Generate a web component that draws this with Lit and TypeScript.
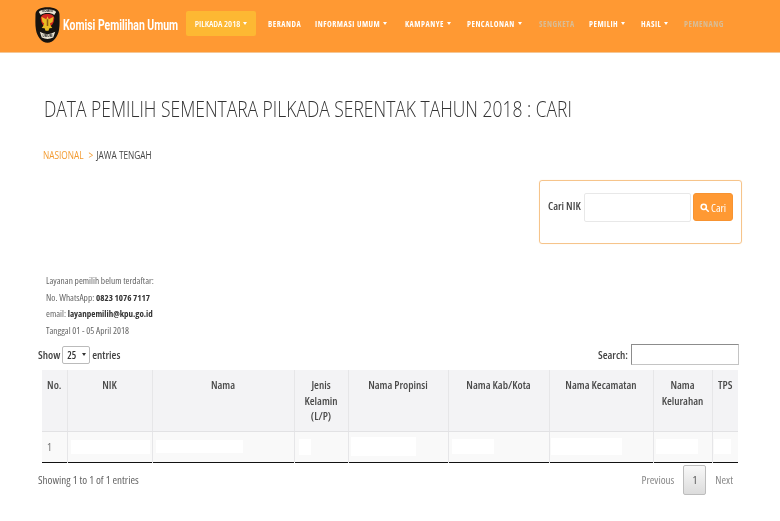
import { LitElement, html, css, svg } from "lit";
import { customElement } from "lit/decorators.js";

const caret = html`<span class="caret"></span>`;
const logo = svg`<svg class="logo" viewBox="0 0 26 38" width="25" height="38" aria-hidden="true">
  <path d="M13 .5C20 .5 25.5 3 25.5 8c0 5 .5 10-.5 16-1 7-6 13.500-12 13.500S2 31 1 24C0 18 .5 13 .5 8 .5 3 6 .5 13 .5Z" fill="#17130f"/>
  <path d="M13 2.500c4 0 8 1 9 3l-2 3c-2-1.500-4-2-7-2s-5 .5-7 2l-2-3c1-2 5-3 9-3Z" fill="#e9e2d2"/>
  <text x="13" y="6" text-anchor="middle" class="ltxt">KOMISI</text>
  <path d="M13 7.500c4 0 7 1.500 7 4.500 0 5-3 9-7 9s-7-4-7-9c0-3 3-4.500 7-4.500Z" fill="#d1261f"/>
  <path d="M13 10l1.300 3 5-2.500-1 5.500-2.800 1.500 1 2.500 1.500 2-3 .5-1 2.500h-3l-1-2.500-3-.5 1.500-2 1-2.500L7.700 16l-1-5.500 5 2.500Z" fill="#e9bb24"/>
  <path d="M12.200 13h1.600v7h-1.600Z" fill="#8a5a16"/>
  <path d="M5 26q8 5 16 0l-2 6q-6 3-12 0Z" fill="#e9e2d2"/>
  <text x="13" y="31" text-anchor="middle" class="ltxt">UMUM</text>
</svg>`;

@customElement("app-root")
export class AppRoot extends LitElement {
  static styles = css`
    :host { display: block; width: 780px; height: 521px; overflow: hidden; background: #fff; color: #333;
      font-family: "Open Sans", "Liberation Sans", sans-serif; font-stretch: 75%; }
    * { box-sizing: border-box; }

    header { height: 53px; background: #ff9933; border-bottom: 1px solid #f5c795; display: flex; align-items: flex-start; padding-left: 35px; will-change: transform; }
    .brand { display: flex; align-items: center; gap: 3px; height: 43px; margin-top: 3px; width: 142px; flex: none; }
    .logo { flex: none; }
    .ltxt { font: 700 3px "Open Sans", sans-serif; fill: #222; }
    .brand span { font: 700 14px "Roboto", sans-serif; color: #fff; white-space: nowrap; display: block; transform: scaleX(.745); transform-origin: left; }
    .pilkada { margin: 11px 0 0 9px; width: 70px; height: 25px; flex: none; background: #fdb833; border-radius: 2px; color: #fff; font-size: 9px; font-weight: 600;
      display: flex; align-items: center; justify-content: center; gap: 3px; white-space: nowrap; }
    nav { display: flex; margin: 11px 0 0 12px; height: 25px; align-items: center; font-size: 8px; font-weight: 700; color: #fff; letter-spacing: .52px; white-space: nowrap; }
    nav a { display: flex; align-items: center; gap: 3px; }
    nav a.off { color: #d9bd97; }
    .caret { display: inline-block; width: 0; height: 0; border: 2.500px solid transparent; border-top: 3px solid currentColor; border-bottom: 0; }
    .n1 { width: 47px; } .n2 { width: 90px; } .n3 { width: 62px; } .n4 { width: 72px; } .n5 { width: 50px; } .n6 { width: 52px; } .n7 { width: 43px; }

    main { padding: 0 41px 0 42px; will-change: transform; }
    h1 { margin: 42px 0 0 2px; font-size: 22.100px; line-height: 26px; font-weight: 300; font-stretch: 100%; color: #333; white-space: nowrap; transform: scaleX(.7915); transform-origin: left; }
    .crumb { margin: 27px 0 0 1px; font-size: 10.300px; font-stretch: 100%; line-height: 14px; display: flex; font-weight: 400; white-space: nowrap; transform: scaleX(.805); transform-origin: left; }
    .crumb .root { color: #f39a2e; }
    .crumb .sep { color: #f39a2e; margin: 0 4px 0 6px; }
    .crumb .cur { color: #444; }

    .searchwrap { display: flex; justify-content: flex-end; margin: 18px -3px 0 0; }
    .searchbox { width: 203px; height: 64px; border: 1px solid #f6c48b; border-radius: 3px; padding: 12px 8px 0 8px; display: flex; align-items: flex-start; box-shadow: 0 0 1px #fbdcb8; }
    .searchbox label { font-size: 11.100px; font-weight: 600; width: 36px; margin-top: 6px; line-height: 14px; color: #444; white-space: nowrap; }
    .searchbox .in { width: 108px; height: 29px; border: 1px solid #e8e8e8; border-radius: 2px; background: #fff; }
    .searchbox button { margin-left: 2px; width: 40px; height: 28px; background: #ff9933; color: #fff; border: 1px solid #f79331; border-radius: 3px; padding: 0; font: 400 11.100px "Open Sans", sans-serif; font-stretch: 75%; display: flex; align-items: center; justify-content: center; gap: 2px; }

    .info { margin: 29px 0 0 4px; font-size: 9.400px; line-height: 16.500px; color: #666; }
    .info b { color: #333; font-weight: 700; font-size: 9px; }

    .controls { display: flex; justify-content: space-between; align-items: center; margin: 5px 0 0 -4px; height: 21px; font-size: 11.100px; font-weight: 600; color: #444; }
    .show { display: flex; align-items: center; gap: 2px; }
    .sel { width: 28px; height: 18px; border: 1px solid #bbb; border-radius: 2px; background: #fff; display: flex; align-items: center; justify-content: space-between; padding: 0 3px 0 4px; font-size: 10px; color: #333; }
    .sel .caret { color: #333; }
    .srch { display: flex; align-items: center; gap: 3px; }
    .srch i { display: block; width: 108px; height: 21px; border: 1px solid #c4c4c4; border-top-color: #8c8c8c; border-left-color: #8c8c8c; background: #fff; }

    table { border-collapse: collapse; table-layout: fixed; width: 696px; margin-top: 5px; border-bottom: 1.500px solid #111; }
    th, td { border: 1px solid #e6e6e8; border-top: 0; border-bottom: 0; padding: 0; }
    th:first-child, td:first-child { border-left: 0; }
    th:last-child, td:last-child { border-right: 0; }
    th { height: 61px; background: #f3f3f5; font-size: 11.100px; line-height: 15.500px; font-weight: 600; color: #4a4a4a; vertical-align: top; padding: 7px 2px 0; border-bottom: 1px solid #e2e2e4; }
    td { height: 31px; background: #f9f9f9; font-size: 11.100px; color: #777; padding: 0 0 0 5px; }
    .w1 { width: 25px; } .w2 { width: 85px; } .w3 { width: 142px; } .w4 { width: 54px; } .w5 { width: 100px; } .w6 { width: 101px; } .w7 { width: 104px; } .w8 { width: 59px; } .w9 { width: 26px; }
    .red { display: block; background: #fff; margin-left: -2px; }
    .r2 { width: 79px; height: 14px; } .r3 { width: 87px; height: 13px; } .r4 { width: 12px; height: 16px; margin-left: -1px; } .r5 { width: 65px; height: 19px; margin-left: -3px; }
    .r6 { width: 42px; height: 15px; } .r7 { width: 71px; height: 17px; margin-left: -4px; } .r8 { width: 42px; height: 15px; margin-left: -3px; } .r9 { width: 17px; height: 15px; margin-left: -4px; }

    .foot { display: flex; justify-content: space-between; margin: 2px 6px 0 -4px; color: #666; font-size: 11.100px; line-height: 15px; }
    .foot .txt { margin-top: 7px; }
    .pager { display: flex; align-items: center; color: #888; gap: 9px; }
    .pager .cur { width: 23px; height: 30px; display: flex; align-items: center; justify-content: center; border: 1px solid #bdbdbd; border-radius: 2px; background: linear-gradient(#f8f8f8, #dcdcdc); color: #555; }
  `;

  render() {
    return html`
      <header>
        <div class="brand">${logo}<span>Komisi Pemilihan Umum</span></div>
        <div class="pilkada">PILKADA 2018 ${caret}</div>
        <nav>
          <a class="n1">BERANDA</a>
          <a class="n2">INFORMASI UMUM ${caret}</a>
          <a class="n3">KAMPANYE ${caret}</a>
          <a class="n4">PENCALONAN ${caret}</a>
          <a class="n5 off">SENGKETA</a>
          <a class="n6">PEMILIH ${caret}</a>
          <a class="n7">HASIL ${caret}</a>
          <a class="off">PEMENANG</a>
        </nav>
      </header>
      <main>
        <h1>DATA PEMILIH SEMENTARA PILKADA SERENTAK TAHUN 2018 : CARI</h1>
        <div class="crumb"><span class="root">NASIONAL</span><span class="sep">&gt;</span><span class="cur">JAWA TENGAH</span></div>
        <div class="searchwrap">
          <div class="searchbox">
            <label>Cari NIK</label>
            <div class="in"></div>
            <button>
              <svg viewBox="0 0 12 12" width="9" height="9" fill="none" stroke="#fff" stroke-width="2"><circle cx="5" cy="5" r="3.500"/><path d="M7.600 7.600 11 11" stroke-linecap="round"/></svg>
              Cari
            </button>
          </div>
        </div>
        <div class="info">
          <div>Layanan pemilih belum terdaftar:</div>
          <div>No. WhatsApp: <b>0823 1076 7117</b></div>
          <div>email: <b>layanpemilih@kpu.go.id</b></div>
          <div>Tanggal 01 - 05 April 2018</div>
        </div>
        <div class="controls">
          <div class="show">Show <span class="sel">25 ${caret}</span> entries</div>
          <div class="srch">Search: <i></i></div>
        </div>
        <table>
          <thead><tr>
            <th class="w1">No.</th><th class="w2">NIK</th><th class="w3">Nama</th><th class="w4">Jenis Kelamin (L/P)</th>
            <th class="w5">Nama Propinsi</th><th class="w6">Nama Kab/Kota</th><th class="w7">Nama Kecamatan</th><th class="w8">Nama Kelurahan</th><th class="w9">TPS</th>
          </tr></thead>
          <tbody><tr>
            <td>1</td><td><span class="red r2"></span></td><td><span class="red r3"></span></td><td><span class="red r4"></span></td>
            <td><span class="red r5"></span></td><td><span class="red r6"></span></td><td><span class="red r7"></span></td><td><span class="red r8"></span></td><td><span class="red r9"></span></td>
          </tr></tbody>
        </table>
        <div class="foot">
          <div class="txt">Showing 1 to 1 of 1 entries</div>
          <div class="pager"><span>Previous</span><span class="cur">1</span><span>Next</span></div>
        </div>
      </main>
    `;
  }
}
